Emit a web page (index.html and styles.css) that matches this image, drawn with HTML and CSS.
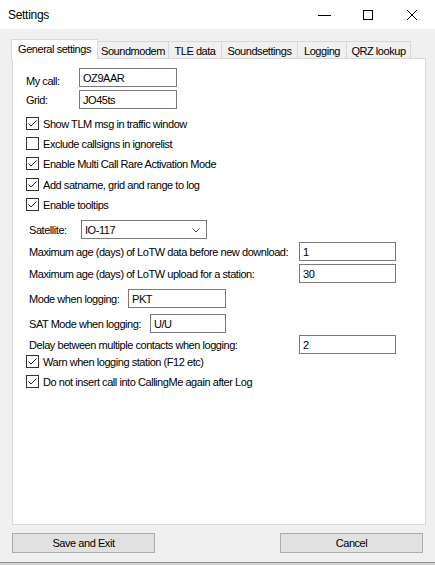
FILE: index.html
```html
<!DOCTYPE html>
<html lang="en">
<head>
<meta charset="utf-8">
<title>Settings</title>
<link rel="stylesheet" href="styles.css">
</head>
<body>
<div class="window">
  <header class="titlebar">
    <span class="title">Settings</span>
    <div class="controls">
      <span class="ctl ctl-min"><svg width="14" height="10" viewBox="0 0 14 10"><path d="M0 5.5 H13" stroke="#000" stroke-width="1"/></svg></span>
      <span class="ctl ctl-max"><svg width="14" height="12" viewBox="0 0 14 12"><rect x="2.5" y="1.5" width="9" height="9" fill="none" stroke="#000" stroke-width="1"/></svg></span>
      <span class="ctl ctl-close"><svg width="14" height="12" viewBox="0 0 14 12"><path d="M2 1 L12 11 M12 1 L2 11" stroke="#000" stroke-width="1"/></svg></span>
    </div>
  </header>

  <div class="client">
    <div class="tabs">
      <div class="tab active tab-general">General settings</div>
      <div class="tab tab-sound">Soundmodem</div>
      <div class="tab tab-tle">TLE data</div>
      <div class="tab tab-soundset">Soundsettings</div>
      <div class="tab tab-log">Logging</div>
      <div class="tab tab-qrz">QRZ lookup</div>
    </div>

    <div class="panel">
      <div class="row field first">
        <label class="lbl lbl-call lbl-low">My call:</label>
        <div class="input w-call">OZ9AAR</div>
      </div>
      <div class="row field gap3">
        <label class="lbl lbl-call">Grid:</label>
        <div class="input w-call">JO45ts</div>
      </div>

      <div class="check first-check"><span class="box checked"><svg width="11" height="11" viewBox="0 0 11 11"><path d="M1.5 5.5 L4 8 L9.5 2.5" fill="none" stroke="#222" stroke-width="1"/></svg></span><span>Show TLM msg in traffic window</span></div>
      <div class="check"><span class="box"></span><span>Exclude callsigns in ignorelist</span></div>
      <div class="check"><span class="box checked"><svg width="11" height="11" viewBox="0 0 11 11"><path d="M1.5 5.5 L4 8 L9.5 2.5" fill="none" stroke="#222" stroke-width="1"/></svg></span><span>Enable Multi Call Rare Activation Mode</span></div>
      <div class="check wide"><span class="box checked"><svg width="11" height="11" viewBox="0 0 11 11"><path d="M1.5 5.5 L4 8 L9.5 2.5" fill="none" stroke="#222" stroke-width="1"/></svg></span><span>Add satname, grid and range to log</span></div>
      <div class="check"><span class="box checked"><svg width="11" height="11" viewBox="0 0 11 11"><path d="M1.5 5.5 L4 8 L9.5 2.5" fill="none" stroke="#222" stroke-width="1"/></svg></span><span>Enable tooltips</span></div>

      <div class="row field gap9 indent">
        <label class="lbl lbl-sat">Satellite:</label>
        <div class="input combo w-sat"><span>IO-117</span><svg class="chev" width="8" height="5" viewBox="0 0 8 5"><path d="M0.5 0.5 L4 4 L7.5 0.5" fill="none" stroke="#444" stroke-width="1"/></svg></div>
      </div>
      <div class="row field gap3 indent">
        <label class="lbl lbl-long">Maximum age (days) of LoTW data before new download:</label>
        <div class="input w-num">1</div>
      </div>
      <div class="row field gap3 indent">
        <label class="lbl lbl-long">Maximum age (days) of LoTW upload for a station:</label>
        <div class="input w-num">30</div>
      </div>
      <div class="row field gap6 indent">
        <label class="lbl lbl-mode">Mode when logging:</label>
        <div class="input w-mode">PKT</div>
      </div>
      <div class="row field gap6 indent">
        <label class="lbl lbl-satmode">SAT Mode when logging:</label>
        <div class="input w-satmode">U/U</div>
      </div>
      <div class="row field gap2 indent">
        <label class="lbl lbl-long">Delay between multiple contacts when logging:</label>
        <div class="input w-num">2</div>
      </div>

      <div class="check gap1"><span class="box checked"><svg width="11" height="11" viewBox="0 0 11 11"><path d="M1.5 5.5 L4 8 L9.5 2.5" fill="none" stroke="#222" stroke-width="1"/></svg></span><span>Warn when logging station (F12 etc)</span></div>
      <div class="check"><span class="box checked"><svg width="11" height="11" viewBox="0 0 11 11"><path d="M1.5 5.5 L4 8 L9.5 2.5" fill="none" stroke="#222" stroke-width="1"/></svg></span><span>Do not insert call into CallingMe again after Log</span></div>
    </div>

    <div class="buttons">
      <button class="btn">Save and Exit</button>
      <button class="btn">Cancel</button>
    </div>
  </div>
  <div class="bottom-edge"></div>
</div>
</body>
</html>
```
FILE: styles.css
```css
* { box-sizing: border-box; }

html, body {
  margin: 0;
  padding: 0;
  background: #f0f0f0;
}

body {
  font-family: "Liberation Sans", Arial, sans-serif;
  font-size: 11px;
  letter-spacing: -0.45px;
  color: #000;
}

.window {
  width: 435px;
  height: 565px;
  display: flex;
  flex-direction: column;
  overflow: hidden;
}

/* Title bar */
.titlebar {
  height: 29px;
  background: #fff;
  display: flex;
  align-items: center;
  justify-content: space-between;
  padding-left: 8px;
}

.title {
  font-size: 12px;
  letter-spacing: -0.3px;
  padding-top: 1px;
}

.controls {
  display: flex;
  align-items: center;
  height: 100%;
}

.ctl {
  display: flex;
  align-items: center;
  justify-content: center;
  width: 14px;
  height: 12px;
}

.ctl-min { margin-right: 29px; }
.ctl-max { margin-right: 30px; }
.ctl-close { margin-right: 16px; }

/* Client area */
.client {
  flex: 1;
  padding: 10px 0 0 12px;
  display: flex;
  flex-direction: column;
}

.tabs {
  display: flex;
  align-items: flex-end;
  height: 19px;
  margin-left: -1px;
}

.tab {
  height: 17px;
  border: 1px solid #d9d9d9;
  border-bottom: none;
  border-left: none;
  background: #f0f0f0;
  display: flex;
  align-items: center;
  justify-content: center;
  padding-top: 1px;
  white-space: nowrap;
}

.tab.active {
  height: 20px;
  margin-bottom: -1px;
  background: #fff;
  border-left: 1px solid #d9d9d9;
  position: relative;
  z-index: 1;
  padding-top: 0;
  padding-bottom: 2px;
}

.tab-general { width: 87px; }
.tab-sound { width: 71px; }
.tab-tle { width: 53px; }
.tab-soundset { width: 76px; }
.tab-log { width: 49px; }
.tab-qrz { width: 64px; }

.panel {
  width: 414px;
  height: 467px;
  background: #fff;
  border: 1px solid #d9d9d9;
  padding: 0 0 0 13px;
  display: flex;
  flex-direction: column;
}

.row {
  display: flex;
  align-items: center;
  height: 19px;
}

.row.first { margin-top: 9px; }
.gap1 { margin-top: 1px; }
.gap2 { margin-top: 2px; }
.gap3 { margin-top: 3px; }
.gap6 { margin-top: 6px; }
.gap9 { margin-top: 9px; }

.indent { padding-left: 3px; }

.lbl {
  white-space: nowrap;
  flex: none;
}

.lbl-low { padding-top: 6px; }
.lbl-call { width: 53px; }
.lbl-sat { width: 52px; }
.lbl-long { width: 270px; }
.lbl-mode { width: 99px; }
.lbl-satmode { width: 121px; }

.input {
  height: 19px;
  border: 1px solid #7a7a7a;
  background: #fff;
  padding: 0 0 0 3px;
  display: flex;
  align-items: center;
  flex: none;
  white-space: nowrap;
}

.w-call { width: 98px; }
.w-sat { width: 126px; }
.w-num { width: 97px; }
.w-mode { width: 98px; }
.w-satmode { width: 76px; }

.combo {
  justify-content: space-between;
  padding-right: 6px;
  border-color: #7a7a7a;
}

.chev { margin-top: 1px; }

/* Checkboxes */
.check {
  display: flex;
  align-items: center;
  height: 13px;
  margin-top: 7px;
  gap: 4px;
  white-space: nowrap;
}

.check.first-check { margin-top: 8px; }
.check.wide { margin-top: 8px; }
.check.gap1 { margin-top: 1px; }

.box {
  width: 13px;
  height: 13px;
  border: 1px solid #333;
  background: #fff;
  display: flex;
  align-items: center;
  justify-content: center;
  flex: none;
}

/* Buttons */
.buttons {
  display: flex;
  justify-content: space-between;
  width: 411px;
  margin-top: 8px;
}

.btn {
  width: 143px;
  height: 20px;
  background: #e1e1e1;
  border: 1px solid #adadad;
  font-family: "Liberation Sans", Arial, sans-serif;
  font-size: 11px;
  letter-spacing: -0.45px;
  color: #000;
  padding: 0;
  margin: 0;
}

.bottom-edge {
  height: 3px;
  border-top: 1px solid #8c8c8c;
  background: #d4d4d4;
}
```
